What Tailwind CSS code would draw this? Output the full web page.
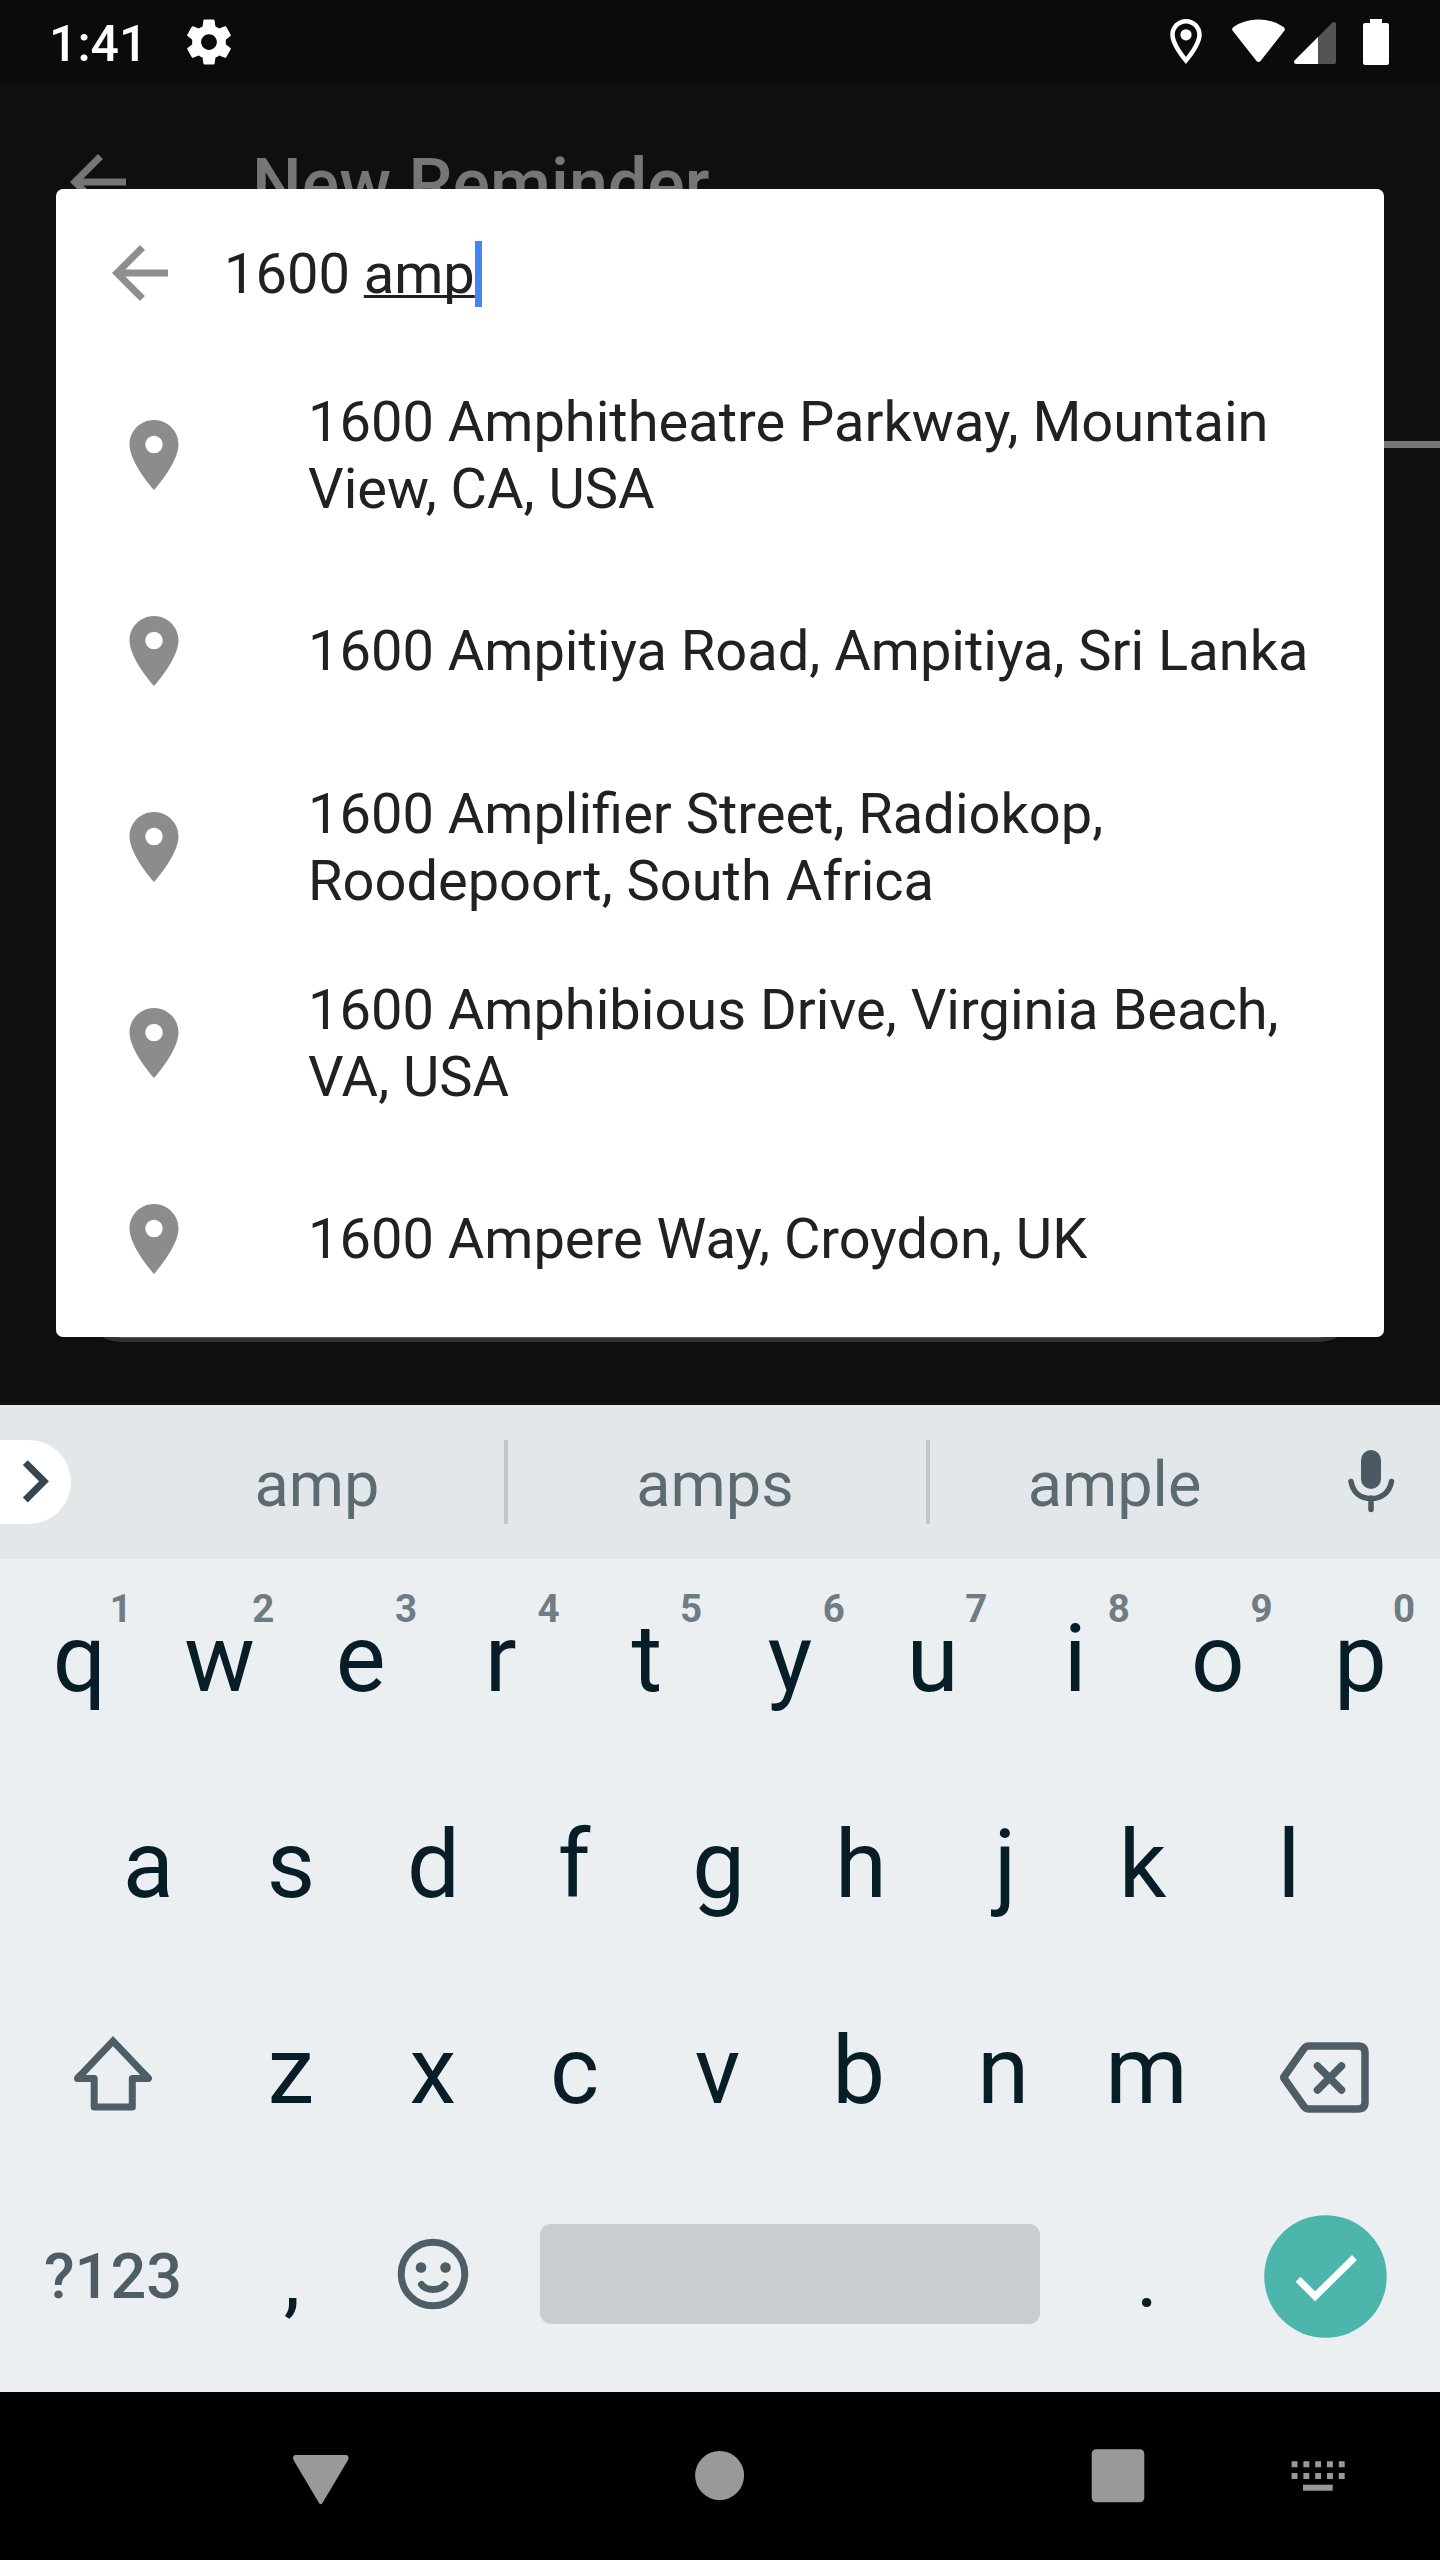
<!DOCTYPE html>
<html lang="en">
<head>
<meta charset="utf-8">
<title>New Reminder</title>
<script src="https://cdn.jsdelivr.net/npm/@tailwindcss/browser@4"></script>
</head>
<body class="w-[1440px] h-[2560px] overflow-hidden bg-black font-['Roboto',sans-serif]">
<svg class="hidden">
  <symbol id="back" viewBox="0 0 24 24"><path d="M20 11H7.83l5.59-5.59L12 4l-8 8 8 8 1.41-1.41L7.83 13H20v-2z"/></symbol>
  <symbol id="pin" viewBox="0 0 24 24"><path d="M12 2C8.13 2 5 5.13 5 9c0 5.25 7 13 7 13s7-7.75 7-13c0-3.87-3.13-7-7-7zm0 9.5a2.5 2.5 0 1 1 0-5 2.5 2.5 0 0 1 0 5z"/></symbol>
</svg>
<div class="flex flex-col w-[1440px] h-[2560px]">

  <!-- Dimmed app with the search dialog on top -->
  <main class="relative h-[1405px] shrink-0 overflow-hidden bg-[#0f0f0f]">
    <div class="flex h-[84px] items-center bg-[#0b0b0b] pl-[49px] text-white">
      <span class="w-[95px] text-[50px] leading-[58px] font-medium pt-[3px]">1:41</span>
      <svg class="ml-[38px] size-[54px]" viewBox="0 0 24 24" fill="currentColor"><path d="M19.43 12.98c.04-.32.07-.64.07-.98s-.03-.66-.07-.98l2.11-1.65c.19-.15.24-.42.12-.64l-2-3.46c-.12-.22-.39-.3-.61-.22l-2.49 1c-.52-.4-1.08-.73-1.69-.98l-.38-2.65C14.46 2.18 14.25 2 14 2h-4c-.25 0-.46.18-.49.42l-.38 2.65c-.61.25-1.17.59-1.69.98l-2.49-1c-.23-.09-.49 0-.61.22l-2 3.46c-.13.22-.07.49.12.64l2.11 1.65c-.04.32-.07.65-.07.98s.03.66.07.98l-2.11 1.65c-.19.15-.24.42-.12.64l2 3.46c.12.22.39.3.61.22l2.49-1c.52.4 1.08.73 1.69.98l.38 2.65c.03.24.24.42.49.42h4c.25 0 .46-.18.49-.42l.38-2.65c.61-.25 1.17-.59 1.69-.98l2.49 1c.23.09.49 0 .61-.22l2-3.46c.12-.22.07-.49-.12-.64l-2.11-1.65zM12 15.5c-1.93 0-3.5-1.57-3.5-3.5s1.57-3.5 3.5-3.5 3.5 1.57 3.5 3.5-1.57 3.5-3.5 3.5z"/></svg>
      <svg class="ml-auto h-[84px] w-[290px]" viewBox="1150 0 290 84" fill="currentColor">
        <g transform="translate(1159 14.5) scale(2.25)"><path d="M12 2C8.13 2 5 5.13 5 9c0 5.25 7 13 7 13s7-7.75 7-13c0-3.87-3.13-7-7-7zM7 9c0-2.76 2.24-5 5-5s5 2.24 5 5c0 2.88-2.88 7.19-5 9.88C9.92 16.21 7 11.85 7 9z"/><circle cx="12" cy="9" r="2.5"/></g>
        <path d="M1232.5 30.5Q1231.500 28.500 1233.500 27Q1244 19.500 1258.500 19.500T1283.500 27Q1285.500 28.500 1284.500 30.500L1260.500 61Q1258.500 63 1256.500 61Z"/>
        <path d="M1318 37V64H1296Q1293 63.500 1294.500 60.500Z"/>
        <path fill="#545454" d="M1318 37L1332.500 22.500Q1336 21 1336 24.500V62Q1336 64 1334 64H1318Z"/>
        <path d="M1370 19h12v4h5q2 0 2 2v38q0 2-2 2h-22q-2 0-2-2v-38q0-2 2-2h5z"/>
      </svg>
    </div>
    <div class="flex h-[196px] items-center pl-14 text-[#767676]">
      <svg class="size-[84px]" fill="currentColor"><use href="#back"/></svg>
      <h1 class="ml-[112px] pt-[3px] text-[70px] leading-[82px] font-medium">New Reminder</h1>
    </div>
    <div class="flex h-[168px] items-end"><div class="ml-auto h-[7px] w-1/2 bg-[#777]"></div></div>
    <div class="mx-20 h-[894px] rounded-[42px] border-4 border-[#333] bg-[#5a5a5a]"></div>

    <section class="absolute left-14 top-[189px] h-[1148px] w-[1328px] rounded-[7px] bg-white text-[56px] leading-[67px] text-[#212121]">
      <div class="flex h-[168px] items-center pl-[42px]">
        <svg class="size-[84px] fill-[#8e8e8e]"><use href="#back"/></svg>
        <div class="ml-[42px] flex items-center pt-[2px]">
          <span class="whitespace-pre">1600 <span class="underline decoration-[3px] underline-offset-[2px] [text-decoration-skip-ink:none]">amp</span></span>
          <span class="h-[66px] w-[7px] bg-[#4285f4]"></span>
        </div>
      </div>
      <ul>
        <li class="flex h-[196px] items-center pl-14"><svg class="size-[84px] shrink-0 fill-[#8c8c8c]"><use href="#pin"/></svg><p class="ml-[112px] whitespace-nowrap pt-[2px]">1600 Amphitheatre Parkway, Mountain<br>View, CA, USA</p></li>
        <li class="flex h-[196px] items-center pl-14"><svg class="size-[84px] shrink-0 fill-[#8c8c8c]"><use href="#pin"/></svg><p class="ml-[112px] whitespace-nowrap">1600 Ampitiya Road, Ampitiya, Sri Lanka</p></li>
        <li class="flex h-[196px] items-center pl-14"><svg class="size-[84px] shrink-0 fill-[#8c8c8c]"><use href="#pin"/></svg><p class="ml-[112px] whitespace-nowrap pt-[2px]">1600 Amplifier Street, Radiokop,<br>Roodepoort, South Africa</p></li>
        <li class="flex h-[196px] items-center pl-14"><svg class="size-[84px] shrink-0 fill-[#8c8c8c]"><use href="#pin"/></svg><p class="ml-[112px] whitespace-nowrap pt-[2px]">1600 Amphibious Drive, Virginia Beach,<br>VA, USA</p></li>
        <li class="flex h-[196px] items-center pl-14"><svg class="size-[84px] shrink-0 fill-[#8c8c8c]"><use href="#pin"/></svg><p class="ml-[112px] whitespace-nowrap">1600 Ampere Way, Croydon, UK</p></li>
      </ul>
    </section>
  </main>

  <!-- Suggestion strip -->
  <div class="flex h-[154px] shrink-0 items-center bg-[#e3e7ea] text-[63px] leading-[74px] text-[#5c6a71]">
    <div class="flex h-[84px] w-[71px] items-center rounded-r-[42px] bg-white"><svg class="h-[84px] w-[71px]" viewBox="0 0 71 84" fill="none" stroke="#37474f" stroke-width="7"><path d="M25.300 22.600L44 41.300L25.300 60"/></svg></div>
    <span class="ml-[57px] w-[376px] pt-[5px] pl-[2px] text-center">amp</span>
    <i class="h-[84px] w-1 bg-[#c1c6c9]"></i>
    <span class="w-[418px] pt-[5px] pr-[4px] text-center">amps</span>
    <i class="h-[84px] w-1 bg-[#c1c6c9]"></i>
    <span class="w-[372px] pt-[5px] pr-[3px] text-center">ample</span>
    <svg class="ml-[36px] h-[84px] w-[66px]" viewBox="1338 1440 66 84" fill="none" stroke="#4a5a62" stroke-width="5.500" stroke-linecap="round"><rect x="1361" y="1450" width="20" height="39" rx="10" fill="#4a5a62" stroke="none"/><path d="M1351 1481.500C1353 1493 1361 1498.500 1371 1498.500S1389.500 1493 1391.500 1481.500M1371 1498v11.500"/></svg>
  </div>

  <!-- Keys -->
  <div class="h-[833px] shrink-0 bg-[#ebeff2] text-[94px] leading-[110px] text-[#071d27]">
    <div class="grid h-[203px] grid-cols-[repeat(10,142.6px)] pl-[5.7px] pb-1 text-center">
      <div class="relative flex items-center justify-center pl-[5px]">q<sup class="absolute left-[104px] top-[27px] text-[38.5px] leading-[45px] font-bold text-[#707c83]">1</sup></div>
      <div class="relative flex items-center justify-center">w<sup class="absolute left-[104px] top-[27px] text-[38.5px] leading-[45px] font-bold text-[#707c83]">2</sup></div>
      <div class="relative flex items-center justify-center pr-[3px]">e<sup class="absolute left-[104px] top-[27px] text-[38.5px] leading-[45px] font-bold text-[#707c83]">3</sup></div>
      <div class="relative flex items-center justify-center pr-[8px]">r<sup class="absolute left-[104px] top-[27px] text-[38.5px] leading-[45px] font-bold text-[#707c83]">4</sup></div>
      <div class="relative flex items-center justify-center pr-[1px]">t<sup class="absolute left-[104px] top-[27px] text-[38.5px] leading-[45px] font-bold text-[#707c83]">5</sup></div>
      <div class="relative flex items-center justify-center">y<sup class="absolute left-[104px] top-[27px] text-[38.5px] leading-[45px] font-bold text-[#707c83]">6</sup></div>
      <div class="relative flex items-center justify-center">u<sup class="absolute left-[104px] top-[27px] text-[38.5px] leading-[45px] font-bold text-[#707c83]">7</sup></div>
      <div class="relative flex items-center justify-center">i<sup class="absolute left-[104px] top-[27px] text-[38.5px] leading-[45px] font-bold text-[#707c83]">8</sup></div>
      <div class="relative flex items-center justify-center">o<sup class="absolute left-[104px] top-[27px] text-[38.5px] leading-[45px] font-bold text-[#707c83]">9</sup></div>
      <div class="relative flex items-center justify-center">p<sup class="absolute left-[104px] top-[27px] text-[38.5px] leading-[45px] font-bold text-[#707c83]">0</sup></div>
    </div>
    <div class="grid h-[206px] grid-cols-[repeat(9,142.6px)] items-center pl-[77px] text-center">
      <span>a</span><span>s</span><span>d</span><span class="pr-[4px]">f</span><span>g</span><span class="pr-[1px]">h</span><span class="pl-[3px]">j</span><span class="pr-[8px]">k</span><span>l</span>
    </div>
    <div class="grid h-[206px] grid-cols-[214px_repeat(7,142.6px)_214px] items-center pl-[6px] text-center">
      <svg class="h-[206px] w-[214px]" viewBox="6 1968 214 206" fill="none" stroke="#4e5e66" stroke-width="7"><path d="M77.500 2078.500L113 2041L148.500 2078.500" /><path stroke-linejoin="round" stroke-linecap="round" d="M146 2075.800L148.500 2078.500H132.300V2107H94.200V2078.500H77.500L80 2075.800"/></svg>
      <span class="pr-[1px]">z</span><span class="pr-[2px]">x</span><span class="pr-[4px]">c</span><span class="pr-[3px]">v</span><span class="pr-[6px]">b</span><span class="pr-[2px]">n</span><span class="pr-[1px]">m</span>
      <svg class="h-[206px] w-[214px]" viewBox="1218 1968 214 206" fill="none" stroke="#4e5e66" stroke-width="7.500" stroke-linejoin="round" stroke-linecap="round"><path d="M1283.500 2077.500L1304 2048.500Q1306 2046 1309 2046H1358Q1365 2046 1365 2053V2102Q1365 2109 1358 2109H1309Q1306 2109 1304 2106.500ZM1317.500 2066L1341.500 2090M1341.500 2066L1317.500 2090"/></svg>
    </div>
    <div class="flex h-[206px] items-center pl-[6px]">
      <span class="w-[214px] text-center text-[63px] leading-[74px] font-medium text-[#4e5e66]">?123</span>
      <span class="w-[142px] pl-[2px] text-center text-[84px] pt-1">,</span>
      <svg class="h-[206px] w-[142px]" viewBox="362 2174 142 206" fill="none" stroke="#4e5e66" stroke-width="7"><circle cx="433" cy="2274" r="31.800"/><g fill="#4e5e66" stroke="none"><circle cx="421" cy="2267.500" r="5.300"/><circle cx="445.500" cy="2267.500" r="5.300"/></g><path stroke-linecap="round" d="M421.500 2284.500Q425 2289.500 433.200 2289.500T445 2284.500"/></svg>
      <div class="ml-9 -mt-[6px] h-[100px] w-[500px] rounded-[11px] bg-[#c9cdd0]"></div>
      <span class="ml-9 w-[142px] text-center text-[84px] pt-1">.</span>
      <svg class="ml-[46px] mb-[2px] size-[123px]" viewBox="1263.500 2215 123 123" fill="none"><circle cx="1325" cy="2276.500" r="61.300" fill="#4db6ac"/><path stroke="#fff" stroke-width="7" d="M1297.500 2279.200L1314.600 2296.300L1354 2257.500"/></svg>
    </div>
  </div>

  <!-- System navigation -->
  <nav class="h-[168px] shrink-0 bg-black">
    <svg class="h-[168px] w-[1440px]" viewBox="0 2392 1440 168" fill="#999">
      <path d="M295 2455H346.500Q349.500 2456 348 2460L322.500 2503Q320.700 2505.500 319 2503L293.500 2460Q292 2456 295 2455Z"/>
      <circle cx="719.600" cy="2475.500" r="24.500"/>
      <rect x="1091.700" y="2449.300" width="52.600" height="53" rx="4.500"/>
      <path fill="none" stroke="#999" stroke-width="6" stroke-dasharray="5.900 5.900" d="M1291.600 2464.300H1344.700M1291.600 2476H1344.700"/>
      <rect x="1303" y="2484.700" width="29.700" height="6"/>
    </svg>
  </nav>
</div>
</body>
</html>
